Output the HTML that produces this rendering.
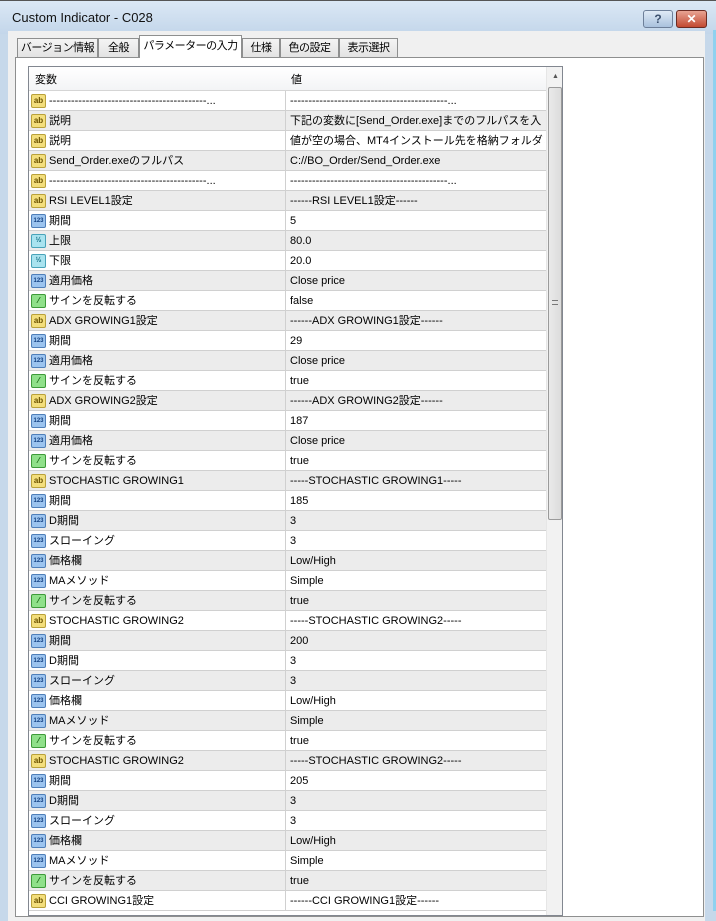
<!DOCTYPE html>
<html><head><meta charset="utf-8"><style>
*{margin:0;padding:0;box-sizing:border-box}
body{width:716px;height:911px;overflow:hidden;background:#c6d8ea;font-family:"Liberation Sans","Noto Sans CJK JP",sans-serif;font-size:11px;color:#000;position:relative}
.title{position:absolute;left:0;top:0;width:716px;height:34px;background:linear-gradient(#dbe8f5,#c3d6ea);border-top:1px solid #555;}
.title span{position:absolute;left:12px;top:9px;font-size:13px;color:#111}
.btn{position:absolute;top:10px;height:18px;border:1px solid #6d7f99;border-radius:3px;color:#fff;font-size:12px;font-weight:bold;text-align:center;line-height:16px}
.help{left:643px;width:30px;background:linear-gradient(#dfeaf6,#a9c1dd);color:#3b506e}
.close{left:676px;width:31px;background:linear-gradient(#e8a493,#c24a32);border-color:#6b2b22}
.frame{position:absolute;left:8px;top:31px;width:697px;height:890px;background:#f0f0f0}
.rightedge{position:absolute;left:713px;top:30px;width:3px;height:881px;background:#8fd1ef}
.panel{position:absolute;left:15px;top:57px;width:689px;height:860px;background:#fff;border:1px solid #8e8f8f}
.tab{position:absolute;top:38px;height:20px;border:1px solid #8e8f8f;border-bottom:none;background:linear-gradient(#f4f4f4,#e2e2e2);font-size:11px;line-height:18px;text-align:center;white-space:nowrap;overflow:hidden;letter-spacing:-0.5px}
.tab.sel{top:35px;height:23px;background:#fff;z-index:2;line-height:20px}
.table{position:absolute;left:28px;top:66px;width:535px;height:850px;border:1px solid #828790;background:#fff;overflow:hidden}
.hdr{position:absolute;left:0;top:0;width:517px;height:24px;background:linear-gradient(#fff,#f3f4f6);border-bottom:1px solid #d5d5d5;font-size:11px;line-height:14px}
.hdr span{position:absolute;top:6px}
.rows{position:absolute;left:0;top:24px;width:517px}
.r{height:20px;border-bottom:1px solid #d0d0d0;position:relative;white-space:nowrap;line-height:14px}
.r:nth-child(even){background:#ececec}
.r .n{position:absolute;left:20px;top:3px;width:232px;height:14px;overflow:hidden;display:block}
.r .v{position:absolute;left:256px;top:0;border-left:1px solid #d0d0d0;height:19px;padding:3px 0 0 4px;width:260px;overflow:hidden;display:block}
.i{position:absolute;left:2px;top:3px;width:15px;height:14px;border-radius:2px;font-size:8px;font-weight:bold;line-height:12px;text-align:center;font-style:normal}
.ab{background:#f3de7c;border:1px solid #b9a13a;color:#6b5200}
.n3{background:#9cc4ef;border:1px solid #4f7fb9;color:#123f80;font-size:6px}
.h{background:#a9e3ef;border:1px solid #49a3b9;color:#0e6b80;font-size:7px}
.b{background:#8fe08a;border:1px solid #3e9a3a;color:#146010}
.sb{position:absolute;left:517px;top:0;width:17px;height:850px;background:#f2f2f2;border-left:1px solid #e6e6e6}
.thumb{position:absolute;left:1px;top:20px;width:14px;height:433px;background:linear-gradient(90deg,#eaeaea,#dcdcdc);border:1px solid #9a9a9a;border-radius:2px}
</style></head><body>
<div class="title"><span>Custom Indicator - C028</span></div>
<div class="btn help">?</div><div class="btn close">✕</div>
<div class="frame"></div><div class="rightedge"></div>
<div class="tab" style="left:17px;width:81px">バージョン情報</div>
<div class="tab" style="left:98px;width:41px">全般</div>
<div class="tab sel" style="left:139px;width:103px">パラメーターの入力</div>
<div class="tab" style="left:242px;width:38px">仕様</div>
<div class="tab" style="left:280px;width:59px">色の設定</div>
<div class="tab" style="left:339px;width:59px">表示選択</div>
<div class="panel"></div>
<div class="table">
<div class="hdr"><span style="left:6px">変数</span><span style="left:262px">値</span></div>
<div class="rows">
<div class="r"><i class="i ab">ab</i><span class="n">-------------------------------------------...</span><span class="v">-------------------------------------------...</span></div>
<div class="r"><i class="i ab">ab</i><span class="n">説明</span><span class="v">下記の変数に[Send_Order.exe]までのフルパスを入・..</span></div>
<div class="r"><i class="i ab">ab</i><span class="n">説明</span><span class="v">値が空の場合、MT4インストール先を格納フォルダと・..</span></div>
<div class="r"><i class="i ab">ab</i><span class="n">Send_Order.exeのフルパス</span><span class="v">C://BO_Order/Send_Order.exe</span></div>
<div class="r"><i class="i ab">ab</i><span class="n">-------------------------------------------...</span><span class="v">-------------------------------------------...</span></div>
<div class="r"><i class="i ab">ab</i><span class="n">RSI LEVEL1設定</span><span class="v">------RSI LEVEL1設定------</span></div>
<div class="r"><i class="i n3">123</i><span class="n">期間</span><span class="v">5</span></div>
<div class="r"><i class="i h">½</i><span class="n">上限</span><span class="v">80.0</span></div>
<div class="r"><i class="i h">½</i><span class="n">下限</span><span class="v">20.0</span></div>
<div class="r"><i class="i n3">123</i><span class="n">適用価格</span><span class="v">Close price</span></div>
<div class="r"><i class="i b">⁄</i><span class="n">サインを反転する</span><span class="v">false</span></div>
<div class="r"><i class="i ab">ab</i><span class="n">ADX GROWING1設定</span><span class="v">------ADX GROWING1設定------</span></div>
<div class="r"><i class="i n3">123</i><span class="n">期間</span><span class="v">29</span></div>
<div class="r"><i class="i n3">123</i><span class="n">適用価格</span><span class="v">Close price</span></div>
<div class="r"><i class="i b">⁄</i><span class="n">サインを反転する</span><span class="v">true</span></div>
<div class="r"><i class="i ab">ab</i><span class="n">ADX GROWING2設定</span><span class="v">------ADX GROWING2設定------</span></div>
<div class="r"><i class="i n3">123</i><span class="n">期間</span><span class="v">187</span></div>
<div class="r"><i class="i n3">123</i><span class="n">適用価格</span><span class="v">Close price</span></div>
<div class="r"><i class="i b">⁄</i><span class="n">サインを反転する</span><span class="v">true</span></div>
<div class="r"><i class="i ab">ab</i><span class="n">STOCHASTIC GROWING1</span><span class="v">-----STOCHASTIC GROWING1-----</span></div>
<div class="r"><i class="i n3">123</i><span class="n">期間</span><span class="v">185</span></div>
<div class="r"><i class="i n3">123</i><span class="n">D期間</span><span class="v">3</span></div>
<div class="r"><i class="i n3">123</i><span class="n">スローイング</span><span class="v">3</span></div>
<div class="r"><i class="i n3">123</i><span class="n">価格欄</span><span class="v">Low/High</span></div>
<div class="r"><i class="i n3">123</i><span class="n">MAメソッド</span><span class="v">Simple</span></div>
<div class="r"><i class="i b">⁄</i><span class="n">サインを反転する</span><span class="v">true</span></div>
<div class="r"><i class="i ab">ab</i><span class="n">STOCHASTIC GROWING2</span><span class="v">-----STOCHASTIC GROWING2-----</span></div>
<div class="r"><i class="i n3">123</i><span class="n">期間</span><span class="v">200</span></div>
<div class="r"><i class="i n3">123</i><span class="n">D期間</span><span class="v">3</span></div>
<div class="r"><i class="i n3">123</i><span class="n">スローイング</span><span class="v">3</span></div>
<div class="r"><i class="i n3">123</i><span class="n">価格欄</span><span class="v">Low/High</span></div>
<div class="r"><i class="i n3">123</i><span class="n">MAメソッド</span><span class="v">Simple</span></div>
<div class="r"><i class="i b">⁄</i><span class="n">サインを反転する</span><span class="v">true</span></div>
<div class="r"><i class="i ab">ab</i><span class="n">STOCHASTIC GROWING2</span><span class="v">-----STOCHASTIC GROWING2-----</span></div>
<div class="r"><i class="i n3">123</i><span class="n">期間</span><span class="v">205</span></div>
<div class="r"><i class="i n3">123</i><span class="n">D期間</span><span class="v">3</span></div>
<div class="r"><i class="i n3">123</i><span class="n">スローイング</span><span class="v">3</span></div>
<div class="r"><i class="i n3">123</i><span class="n">価格欄</span><span class="v">Low/High</span></div>
<div class="r"><i class="i n3">123</i><span class="n">MAメソッド</span><span class="v">Simple</span></div>
<div class="r"><i class="i b">⁄</i><span class="n">サインを反転する</span><span class="v">true</span></div>
<div class="r"><i class="i ab">ab</i><span class="n">CCI GROWING1設定</span><span class="v">------CCI GROWING1設定------</span></div>
</div>
<div class="sb"><div style="position:absolute;left:5px;top:6px;font-size:7px;color:#555">▲</div><div class="thumb"><div style="position:absolute;left:3px;top:212px;width:6px;height:5px;border-top:1px solid #777;border-bottom:1px solid #777"></div></div></div>
</div>
</body></html>
